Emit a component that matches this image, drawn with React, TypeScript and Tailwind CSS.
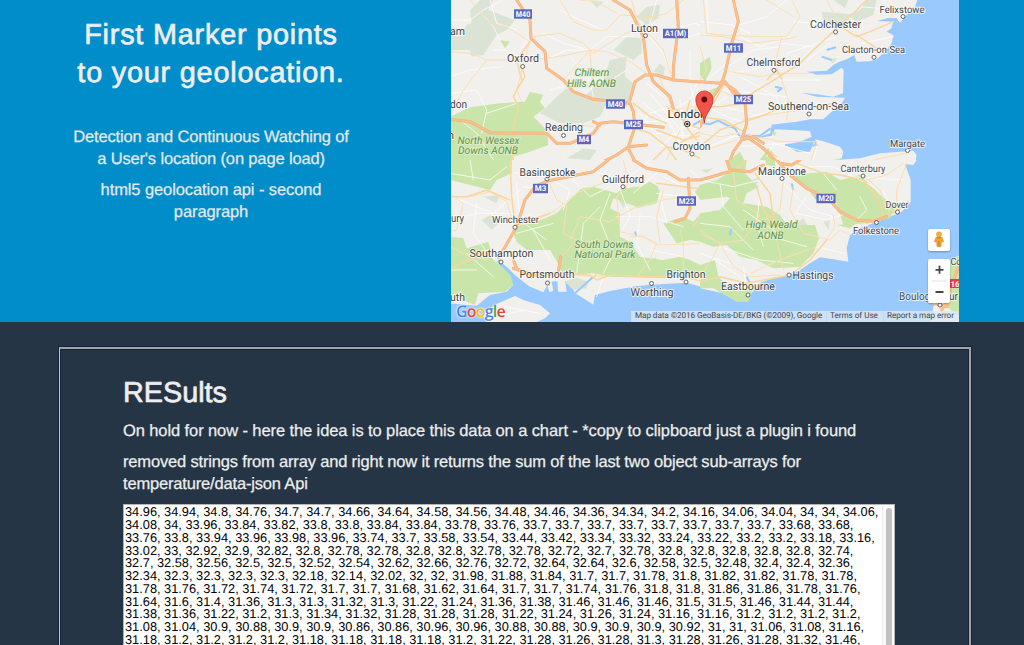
import React from 'react';

type Kind = 'city' | 'small' | 'capital' | 'park';
type Label = { t: string; x: number; y: number; w: number; k?: Kind; a?: 'start' };

const labels: Label[] = [
  { t: 'am', x: 450, y: 35, w: 15, a: 'start' },
  { t: 'don', x: 450, y: 108, w: 17, a: 'start' },
  { t: 'n', x: 448, y: 139, w: 6, a: 'start' },
  { t: 'ury', x: 451, y: 222, w: 13, a: 'start' },
  { t: 'uth', x: 450, y: 301, w: 15, a: 'start' },
  { t: 'Oxford', x: 523, y: 61.5, w: 32 },
  { t: 'Luton', x: 644.5, y: 32, w: 27 },
  { t: 'Reading', x: 564, y: 131, w: 38 },
  { t: 'London', x: 687, y: 118, w: 39, k: 'capital' },
  { t: 'Croydon', x: 691.5, y: 150, w: 38 },
  { t: 'Basingstoke', x: 547.5, y: 176, w: 56 },
  { t: 'Guildford', x: 623, y: 183, w: 42 },
  { t: 'Winchester', x: 515.5, y: 223, w: 47, k: 'small' },
  { t: 'Southampton', x: 501.5, y: 257, w: 64 },
  { t: 'Portsmouth', x: 547, y: 278, w: 55 },
  { t: 'Worthing', x: 652, y: 296, w: 43 },
  { t: 'Brighton', x: 686, y: 278, w: 39 },
  { t: 'Eastbourne', x: 748, y: 290, w: 54 },
  { t: 'Hastings', x: 813, y: 279, w: 41 },
  { t: 'Felixstowe', x: 902, y: 13, w: 45, k: 'small' },
  { t: 'Colchester', x: 835.5, y: 28, w: 51 },
  { t: 'Clacton-on-Sea', x: 873.5, y: 53, w: 63, k: 'small' },
  { t: 'Chelmsford', x: 773.5, y: 65.5, w: 54 },
  { t: 'Southend-on-Sea', x: 808.5, y: 110, w: 81 },
  { t: 'Margate', x: 907.5, y: 147, w: 35, k: 'small' },
  { t: 'Maidstone', x: 782, y: 175, w: 48 },
  { t: 'Canterbury', x: 863, y: 172, w: 45, k: 'small' },
  { t: 'Dover', x: 897, y: 208, w: 23, k: 'small' },
  { t: 'Folkestone', x: 876, y: 234, w: 46, k: 'small' },
  { t: 'Boulogne-sur', x: 899, y: 300, w: 59, a: 'start' },
  { t: 'Co', x: 950.5, y: 265, w: 11, k: 'small', a: 'start' },
  { t: 'Chiltern', x: 592, y: 76, w: 35, k: 'park' },
  { t: 'Hills AONB', x: 591.5, y: 86.5, w: 49, k: 'park' },
  { t: 'North Wessex', x: 488.5, y: 143.5, w: 62, k: 'park' },
  { t: 'Downs AONB', x: 488, y: 154, w: 60, k: 'park' },
  { t: 'South Downs', x: 604, y: 247.5, w: 59, k: 'park' },
  { t: 'National Park', x: 605, y: 258, w: 61, k: 'park' },
  { t: 'High Weald', x: 771.5, y: 228, w: 52, k: 'park' },
  { t: 'AONB', x: 770.5, y: 238.5, w: 26, k: 'park' },
];

const shields: [string, number, number, number][] = [
  ['M40', 523, 14, 18], ['A1(M)', 675.5, 33.5, 25], ['M40', 615.5, 104, 19], ['M25', 633.5, 124.5, 19],
  ['M4', 584, 139.5, 14], ['M11', 733.5, 48, 19], ['M25', 743.5, 99.5, 19], ['M3', 540.5, 188.5, 15],
  ['M23', 686.5, 201, 19], ['M20', 826, 198.5, 19],
];

const towns: [number, number][] = [
  [522.7, 66.5], [645.5, 35.7], [563.5, 135.5], [692, 154], [547, 179], [623, 186.7], [515, 227.3], [501, 262],
  [547.5, 283], [651.5, 283.5], [686, 282], [748, 295], [789, 275], [903, 16.5], [835.5, 32], [874, 57.3],
  [774, 70.3], [809, 114], [907.5, 150.5], [782, 178.5], [863, 176], [897.5, 212], [876.5, 222.5], [940, 305],
];

type TileProps = {
  x: number; y: number; w: number; h: number;
  land: string; pale: string; park: string; water?: string; minor: string; yellow: string; thin: string; major: string;
};

function Tile({ x, y, w, h, land, pale, park, water, minor, yellow, thin, major }: TileProps) {
  return (
    <svg x={x} y={y} width={w} height={h} viewBox={`0 0 ${w * 3} ${h * 3}`}>
      <path d={`M0 0H${w * 3}V${h * 3}H0Z`} fill="#99c9fd" />
      <path d={land} fill="#f2f0ed" />
      <path d={pale} fill="#dbe4d4" />
      <path d={park} fill="#c9e5a9" />
      {water && <path d={water} fill="none" stroke="#99c9fd" strokeWidth="6" strokeLinejoin="round" />}
      <g fill="none" strokeLinejoin="round" strokeLinecap="round">
        <path d={minor} stroke="#fff" strokeOpacity="0.75" strokeWidth="3" />
        <path d={thin} stroke="#fadfb2" strokeWidth="3" />
        <path d={yellow} stroke="#f9d69b" strokeWidth="4.5" />
        <path d={major} stroke="#f2ad74" strokeWidth="9" />
        <path d={major} stroke="#fabf8d" strokeWidth="6.5" />
      </g>
    </svg>
  );
}

function MapCanvas() {
  return (
    <svg className="block h-[322px] w-[508px]" viewBox="451 0 508 322">
      <Tile
        x={450} y={0} w={250} h={160}
        land="M0 0H780V495H0Z"
        pale="M0 80L40 90L50 75L65 70L60 30L90 0H130L115 30L195 60L170 90L140 105L100 165L65 170L60 150H0Z M270 340L320 290L350 265L400 290L470 310L450 350L400 370L330 370Z M400 290L460 240L480 180L530 170L525 230L550 250L530 320L480 310Z M490 150L530 110L575 115L575 160L550 180Z M560 50L590 20L630 15L625 55L590 75Z M350 475L400 445L440 450L420 480Z M610 215L630 190L645 205L640 225Z M420 0L460 5L440 25Z"
        park="M0 350L60 322L150 310L225 305L240 275L280 285L270 305L285 325L250 350L290 390L295 435L240 455L190 470L185 495H0Z M150 120L180 125L165 145Z M760 160L780 190V245L760 225Z"
        water="M730 375L755 360L770 375"
        minor="M0 60L60 60L100 30L160 0M90 35L130 80L150 120M130 150L170 150L195 175M0 230L60 210L160 200M120 0L140 70L200 90M240 110L210 150M285 180L350 150L420 150M280 100L340 130L400 145M360 170L420 240L430 290M300 270L340 260M0 280L80 270L110 330L95 400M110 340L200 310M420 150L470 110L550 110M470 250L530 210M330 30L390 60L460 90M600 110L640 160L660 210M620 0L600 70M690 80L740 70L780 95M550 400L600 340L660 320M570 340L650 450M590 250L640 290M600 280L700 400M620 400L740 410M650 340L720 300L740 250M660 330L780 420M690 300L700 450M720 250L740 330L780 330M640 370L710 320L780 310M630 440L700 380L780 390M720 150L720 240M650 100L720 110L780 90M560 370L650 360M580 310L660 370L690 430M30 360L80 400L140 495"
        thin="M0 155L60 160L110 180L200 180L290 175L350 165L420 150L470 155L540 185L590 220M240 125L170 80L120 70L60 0M250 110L330 100L400 130L430 160L510 110L570 80M330 0L370 65L430 90L470 90L510 45L620 50M420 150L340 240M420 155L430 270L520 320M0 350L40 270L110 180M390 0L440 5L500 40M700 0L650 40L580 60M240 120L200 270L215 305M545 0L560 60L640 150L665 230M670 330L780 310M620 210L660 310M290 400L350 370L430 380M690 390L650 480"
        yellow="M215 200L225 230L200 270L190 290L205 320L185 400L190 495M240 125L200 180L215 240M660 320L700 340L740 330L780 300M540 380L600 400L650 440L690 495M650 320L710 370L780 400M620 390L700 420L780 400M550 310L600 350L650 370M690 430L740 400L780 380M610 480L650 440L700 450L780 490M720 300L700 370L740 420M760 260L740 320L720 350"
        major="M200 0L220 30L240 60L243 115L285 155L290 205L340 240L370 275L430 298L540 310L550 335L555 380L535 440L500 465L440 495M0 358L60 365L120 398L290 400L320 430L360 430L430 400L450 370L490 365L640 382M490 0L540 30L580 110L590 195L610 245L660 290L670 325M680 0L685 80L670 200L670 240L620 225L585 225L555 245L540 300M670 240L780 248M535 440L590 435M430 365L450 375M535 445L560 495"
      />
      <Tile
        x={700} y={0} w={259} h={160}
        land="M0 0H652L645 20L620 45L600 68L590 55L565 54L530 63L580 65L574 85L560 95L580 105L575 130L560 150L530 178L510 184L470 185L463 165L440 178L415 187L400 195L380 212L320 215L350 224L395 223L425 203L431 210L429 280L400 290L350 283L305 278L350 290L435 293L425 310L390 340L370 358L330 358L290 365L250 370L215 374L211 400L180 410L130 400V405L180 414L215 407L225 388L330 393L335 410L300 425L255 435L290 455L330 455L345 418L370 424L420 440L430 455L425 475L410 480L480 475L540 460L600 455L640 452L650 465L645 495H0Z"
        pale="M365 35L445 42L450 70L410 90L370 60Z M400 0L445 0L435 25Z M385 178L412 174L400 190Z M440 45L480 30L500 0L530 0L520 45L470 65Z"
        park="M0 190L30 170L35 205L15 245L0 225Z M90 480L120 455L140 495H85Z M180 480L205 443L220 460L215 495H180Z M25 315L30 270L70 255L40 290Z M215 397L230 397L224 408Z M400 480L425 474L410 490Z"
        water="M0 370L30 372L55 362L80 375L105 385L120 410L150 408L180 408L212 385M225 260L245 265L232 275M380 150L408 142M395 180L365 170M310 440L350 435L340 415M255 435L320 432L290 450"
        minor="M0 65L100 75L150 100M20 0L25 100M100 80L200 50L260 0M120 110L180 140L270 110M100 190L160 150L240 140M240 130L340 140M260 160L350 130L410 110M90 220L200 200L250 250M20 240L80 190M60 270L170 280L260 290M150 350L230 330L280 330M120 230L230 290L240 340M250 240L360 240M0 310L80 350L140 370M0 340L80 290M0 400L120 410L190 430M110 440L260 430M0 450L100 410L140 370M200 470L220 430L330 460M350 440L340 480M30 310L150 340M280 65L360 70M480 20L600 30M480 130L580 110M320 180L390 130"
        thin="M0 105L70 110L150 130L240 120L290 110M275 0L300 50L260 110L180 110L60 105L20 100L10 0M90 215L180 230L240 220L340 220M245 115L225 190L245 240L265 300L260 360M0 140L20 210L0 240M130 360L200 345L270 335L400 315M200 0L280 50M430 90L380 0M0 400L60 410L120 400L240 425L350 425M0 455L110 420M30 300L60 270L100 290M330 490L350 430M480 495L540 475L620 460"
        yellow="M0 440L60 390L130 365L180 350L250 320L330 325L400 310M140 290L230 235L300 190L340 150L405 90L470 30L500 0M430 85L470 110L510 95L580 65M470 105L530 145M0 320L60 320L130 310M0 350L70 360L130 395M40 310L75 250M140 410L190 445L230 470M245 235L230 210L200 240"
        major="M100 0L115 65L95 130L75 220L65 250L0 245M65 245L105 270L135 305L140 370L125 420L100 455L85 495M0 380L20 320L70 245M140 410L190 445L240 495M125 420L160 410L190 430M75 245L105 285"
      />
      <Tile
        x={450} y={160} w={250} h={162}
        land="M0 0H780V388L710 368L640 372L560 378L480 393L435 405L430 434L400 415L375 400L360 370L345 362L350 395L325 395L318 363L305 365L310 392L298 397L292 375L280 397L240 380L200 350L170 320L145 305L155 330L190 375L170 395L120 405L80 437L0 430Z M95 460L145 430L195 408L220 420L270 435L300 460L285 475L240 495H115Z"
        pale="M345 365L375 352L415 365L410 385L370 390Z M95 180L120 165L150 185L125 210Z M100 110L150 105L140 130Z M370 150L390 120L430 150L400 170Z M500 110L530 90L550 110L520 145Z M120 310L145 302L150 330Z M600 300L620 290L615 310Z"
        park="M0 0H185V40L140 60L120 90L60 75L0 60Z M190 220L210 195L250 190L320 160L350 130L395 85L430 80L500 100L520 80L550 90L600 65L625 80L620 130L560 140L490 115L480 145L510 160L510 230L540 245L570 290L640 300L690 290L720 300L750 315V350L640 355L480 350L430 340L335 345L330 320L300 270L230 270L200 245Z M640 190L700 170L730 185L750 162V245L720 240L680 250L660 220Z M735 95L750 75V118Z M0 230L40 235L50 265L115 245L130 300L180 340L190 375L165 395L85 400L75 435L0 405Z M515 90L555 80L600 80L630 90L620 130L560 145Z"
        water="M145 300L180 340L210 360M375 400L430 350M555 215L560 230M320 395L320 365"
        minor="M0 40L120 60L170 20M60 0L70 60M190 40L280 30M200 70L210 180L290 240M210 90L130 160L30 120M0 180L80 160L190 160M80 130L70 220L120 290M0 330L80 330M50 280L130 350M200 220L310 190M250 210L300 300M290 50L360 90L340 150M350 40L420 110L480 80M430 30L500 60L540 170L510 220M480 100L450 180L490 280L460 340M380 340L400 190L450 140M500 170L600 170L700 200M550 100L630 30M630 110L650 190M640 50L700 80M570 160L560 250L600 330M600 270L700 290M620 100L700 110M540 50L600 0M460 350L440 410M160 440L270 460M130 470L230 450M220 80L290 90M720 30L780 80"
        thin="M0 110L60 110L120 95L170 125L190 190M0 100L40 130L20 210L0 215M200 180L250 185L310 155L380 100L480 60M290 50L320 120L350 135L340 220L380 240L335 290M360 240L390 170L480 185L550 145L640 120L700 110M500 110L510 215L580 230L620 250L600 300L560 350M520 0L535 70L500 110M540 230L580 230L620 255L780 250M640 90L620 170L630 250M0 260L60 290L120 300M320 340L420 350L500 345M690 210L700 250L700 355M780 120L730 200"
        yellow="M0 110L50 110L110 90L180 120M180 0L185 110L195 195M110 285L50 300L0 330M330 340L420 345L440 360L480 345L620 350L700 350L780 370M430 355L440 340M620 70L780 90M200 195L240 180L300 160"
        major="M550 0L590 25L650 35L690 60L780 60M145 292L160 270L200 200L225 120L255 80L295 62L430 35L475 0M715 55L720 145L705 175L675 185M190 300L200 325L230 340M190 325L250 345L330 340M332 290L325 335"
      />
      <Tile
        x={700} y={160} w={259} h={162}
        land="M0 0H650L640 15L615 12L632 60V125L605 155L560 175L520 190L480 205L450 225L440 265L445 305L400 298L360 292L330 310L300 330L270 345L220 355L175 370L155 400L125 425L95 415L70 400L0 385Z M780 285L770 290L750 315L720 400L700 440L690 495H780Z"
        pale="M280 195L310 175L325 200L300 215Z M370 185L390 180L385 210Z M450 90L485 75L475 100Z M0 30L40 25L20 40Z M155 60L180 50L170 75Z"
        park="M0 75L50 60L85 40L80 0H140L135 40L175 80L140 100L130 130L80 110L0 120Z M0 160L60 150L90 115L130 130L200 140L240 165L260 195L345 195L357 235L340 280L300 320L220 325L170 300L120 290L80 255L40 260L0 245Z M270 45L380 35L420 60L480 45L540 105L590 140L570 175L500 190L430 195L410 130L340 110L320 80Z M0 315L45 300L55 350L80 375L110 395L165 370L145 425L110 425L40 385L0 385Z M195 0H225V20L200 15Z M410 195L470 190L450 205Z M750 310L780 285V470L740 440L745 370Z"
        water="M90 225L95 205M275 70L280 90M140 350L150 370M345 115L360 105"
        minor="M0 60L100 80L180 60M60 70L70 140L130 210M180 100L170 190L190 260M240 60L330 150L400 170M320 110L260 200M270 20L400 20L520 80M430 0L450 50L610 60M550 90L570 150M370 40L410 90M290 160L380 180L440 160M0 190L90 200L160 270M130 150L250 230M60 260L180 300L280 310M30 290L120 350M350 260L430 280M180 220L320 260M480 110L500 150L470 180M130 320L140 390M0 280L90 310"
        thin="M100 35L110 120L180 165L130 240L60 250L0 220M0 210L60 250L100 320L150 350L240 345M280 80L270 150L310 220L390 240L420 210L450 225M400 165L405 200L380 240L340 285M175 180L230 240L250 330M470 0L500 55L540 90L560 150M620 10L590 90L590 150M0 350L40 290L60 250M250 60L240 150L180 190M150 340L240 300L350 260M500 60L560 45L610 10"
        yellow="M90 30L60 40L0 60M290 10L370 40L420 45L490 60L530 110L550 165M165 40L210 100L220 180M0 365L60 350L140 370L270 345L330 300L380 240M500 190L590 155L625 125M100 35L140 0M170 80L190 150L240 210"
        major="M80 0L90 30L150 35L190 15M0 60L90 35M230 0L270 45L320 85L390 120L420 155L470 180L520 184L560 170M240 10L275 15L300 0M780 310L750 390L740 440L700 430M725 450L740 425"
      />
      {shields.map(([t, x, y, w], i) => (
        <g key={i}>
          <rect x={x - w / 2} y={y - 4.7} width={w} height="9.4" fill="#5b66be" />
          <text x={x} y={y + 2.7} textAnchor="middle" textLength={w - 3.5} lengthAdjust="spacingAndGlyphs" className="fill-white font-['Roboto',sans-serif] text-[8px] font-bold">{t}</text>
        </g>
      ))}
      {towns.map(([x, y], i) => <circle key={i} cx={x} cy={y} r="2" fill="#fff" stroke="#555" strokeWidth="0.9" />)}
      {labels.map((l, i) => {
        const park = l.k === 'park';
        const cls = park
          ? "fill-[#5d9147] font-['Roboto',sans-serif] text-[10.5px] italic"
          : l.k === 'small'
            ? "fill-[#444] font-['Roboto',sans-serif] text-[10px]"
            : l.k === 'capital'
              ? "fill-[#222] font-['Roboto',sans-serif] text-[11.5px]"
              : "fill-[#444] font-['Roboto',sans-serif] text-[11px]";
        return (
          <text key={i} x={l.x} y={l.y} textAnchor={l.a ?? 'middle'} textLength={l.w} lengthAdjust="spacingAndGlyphs"
            stroke={park ? '#e3f0d3' : '#fff'} strokeOpacity="0.8" strokeWidth="1.8" paintOrder="stroke" className={cls}>{l.t}</text>
        );
      })}
      <circle cx="687.3" cy="124" r="2.7" fill="#fff" stroke="#222" />
      <circle cx="687.3" cy="124" r="1.3" fill="#222" />
      <path d="M704.3 123C704 113 695.8 109 695.8 99.5A8.6 8.6 0 0 1 713 99.5C713 109 704.8 113 704.3 123Z" fill="#f5534a" stroke="#b6322c" strokeWidth="0.8" />
      <circle cx="704.3" cy="99.5" r="2.9" fill="#5f0f10" />
      <rect x="948" y="279" width="12" height="9" fill="#e23b48" />
      <text x="950.5" y="286.5" className="fill-white font-['Roboto',sans-serif] text-[8px] font-bold">16</text>
    </svg>
  );
}

const wordmark: [string, string][] = [
  ['G', 'text-[#4285f4]'], ['o', 'text-[#ea4335]'], ['o', 'text-[#fbbc05]'], ['g', 'text-[#4285f4]'], ['l', 'text-[#34a853]'], ['e', 'text-[#ea4335]'],
];

function MapPanel() {
  return (
    <div className="relative h-[322px] w-[508px] overflow-hidden">
      <MapCanvas />
      <div className="absolute bottom-[1px] left-[5px] flex font-['Open_Sans',sans-serif] text-[16px] leading-[20px] font-semibold tracking-[-0.8px] [text-shadow:0_0_2px_#fff,0_0_2px_#fff]">
        {wordmark.map(([c, cls], i) => <span key={i} className={cls}>{c}</span>)}
      </div>
      <div className="absolute top-[228.5px] left-[477px] flex h-[22px] w-[22px] items-center justify-center rounded-[2px] bg-white shadow-[0_1px_2px_rgba(0,0,0,0.3)]">
        <svg className="h-[17px] w-[12px]" viewBox="0 0 12 17">
          <path d="M3 6.3Q6 5 9 6.3L10.7 10.5L9.3 11.2L8.5 9.4L8 15.7H4L3.5 9.4L2.7 11.2L1.3 10.5Z" fill="#f2a72c" stroke="#ce8420" strokeWidth="0.5" />
          <circle cx="6" cy="3.3" r="2.5" fill="#f7b239" stroke="#ce8420" strokeWidth="0.5" />
          <path d="M6 10V15.5M4 6.6Q6 8 8 6.6" stroke="#b9721b" strokeWidth="0.8" fill="none" />
        </svg>
      </div>
      <div className="absolute top-[259px] left-[477px] flex h-[44px] w-[22px] flex-col items-center rounded-[2px] bg-white shadow-[0_1px_2px_rgba(0,0,0,0.3)]">
        <svg className="h-[44px] w-[22px]" viewBox="0 0 22 44">
          <path d="M7.5 10.8H15.5M11.5 6.8V14.8M7.5 33H15.5" stroke="#444" strokeWidth="1.8" />
          <path d="M3.5 22H18.5" stroke="#e3e3e3" />
        </svg>
      </div>
      <div className="absolute right-0 bottom-0 flex h-[11px] items-center bg-[#dce8f3]/80 font-['Roboto',sans-serif] text-[8.2px] leading-[11px] whitespace-nowrap text-[#444]">
        <span className="w-[195px] pl-[4px] tracking-[-0.09px]">Map data ©2016 GeoBasis-DE/BKG (©2009), Google</span>
        <span className="w-[57px] border-l border-[#c3d9ef] pl-[3px] tracking-[-0.05px]">Terms of Use</span>
        <span className="w-[76px] border-l border-[#c3d9ef] pl-[3px] tracking-[-0.08px]">Report a map error</span>
      </div>
    </div>
  );
}

const rows = [
  '34.96, 34.94, 34.8, 34.76, 34.7, 34.7, 34.66, 34.64, 34.58, 34.56, 34.48, 34.46, 34.36, 34.34, 34.2, 34.16, 34.06, 34.04, 34, 34, 34.06,',
  '34.08, 34, 33.96, 33.84, 33.82, 33.8, 33.8, 33.84, 33.84, 33.78, 33.76, 33.7, 33.7, 33.7, 33.7, 33.7, 33.7, 33.7, 33.7, 33.68, 33.68,',
  '33.76, 33.8, 33.94, 33.96, 33.98, 33.96, 33.74, 33.7, 33.58, 33.54, 33.44, 33.42, 33.34, 33.32, 33.24, 33.22, 33.2, 33.2, 33.18, 33.16,',
  '33.02, 33, 32.92, 32.9, 32.82, 32.8, 32.78, 32.78, 32.8, 32.8, 32.78, 32.78, 32.72, 32.7, 32.78, 32.8, 32.8, 32.8, 32.8, 32.8, 32.74,',
  '32.7, 32.58, 32.56, 32.5, 32.5, 32.52, 32.54, 32.62, 32.66, 32.76, 32.72, 32.64, 32.64, 32.6, 32.58, 32.5, 32.48, 32.4, 32.4, 32.36,',
  '32.34, 32.3, 32.3, 32.3, 32.3, 32.18, 32.14, 32.02, 32, 32, 31.98, 31.88, 31.84, 31.7, 31.7, 31.78, 31.8, 31.82, 31.82, 31.78, 31.78,',
  '31.78, 31.76, 31.72, 31.74, 31.72, 31.7, 31.7, 31.68, 31.62, 31.64, 31.7, 31.7, 31.74, 31.76, 31.8, 31.8, 31.86, 31.86, 31.78, 31.76,',
  '31.64, 31.6, 31.4, 31.36, 31.3, 31.3, 31.32, 31.3, 31.22, 31.24, 31.36, 31.38, 31.46, 31.46, 31.46, 31.5, 31.5, 31.46, 31.44, 31.44,',
  '31.38, 31.36, 31.22, 31.2, 31.3, 31.34, 31.32, 31.28, 31.28, 31.28, 31.22, 31.24, 31.26, 31.24, 31.16, 31.16, 31.2, 31.2, 31.2, 31.2,',
  '31.08, 31.04, 30.9, 30.88, 30.9, 30.9, 30.86, 30.86, 30.96, 30.96, 30.88, 30.88, 30.9, 30.9, 30.9, 30.92, 31, 31, 31.06, 31.08, 31.16,',
  '31.18, 31.2, 31.2, 31.2, 31.2, 31.18, 31.18, 31.18, 31.18, 31.2, 31.22, 31.28, 31.26, 31.28, 31.3, 31.28, 31.26, 31.28, 31.32, 31.46,',
];

export default function App() {
  return (
    <div className="h-[645px] w-[1024px] overflow-hidden bg-[#253545] font-['Liberation_Sans',sans-serif] text-[#eee] [text-rendering:geometricPrecision]">
      <header className="flex h-[322px] bg-[#008dc9]">
        <div className="w-[451px] pt-[16px] pr-[29px] text-center">
          <h1 className="text-[28.8px] leading-[38.4px] tracking-[0.8px] [-webkit-text-stroke:0.7px_#eee]">First Marker points<br />to your geolocation.</h1>
          <p className="mt-[33px] text-[16.5px] leading-[22.4px] tracking-[-0.15px] text-[#e4e9ec] [-webkit-text-stroke:0.25px_#e4e9ec]">Detection and Continuous Watching of<br />a User's location (on page load)</p>
          <p className="mt-[8px] text-[16.5px] leading-[22.4px] tracking-[-0.1px] text-[#e4e9ec] [-webkit-text-stroke:0.25px_#e4e9ec]">html5 geolocation api - second<br />paragraph</p>
        </div>
        <MapPanel />
      </header>
      <main className="mt-[25px] ml-[59px] h-[400px] w-[912px] border-2 border-l-1 border-[#a3a3a7] border-l-[#c4c6ca] pt-[25.5px] pl-[63px] shadow-[0_0_0_1px_#17233a,inset_0_0_0_1px_#17233a]">
        <h2 className="text-[28.8px] leading-[36px] [-webkit-text-stroke:0.7px_#eee]">RESults</h2>
        <p className="mt-[9.5px] text-[16.5px] leading-[22.4px] tracking-[-0.1px] [-webkit-text-stroke:0.25px_#eee]">On hold for now - here the idea is to place this data on a chart - *copy to clipboard just a plugin i found</p>
        <p className="mt-[8.5px] text-[16.5px] leading-[22.4px] tracking-[-0.17px] [-webkit-text-stroke:0.25px_#eee]">removed strings from array and right now it returns the sum of the last two object sub-arrays for<br />temperature/data-json Api</p>
        <div className="mt-[8px] flex h-[200px] w-[772px] justify-between border border-[#b5b5b5] bg-white pt-[1.4px] pl-[1px] text-black">
          <div className="text-[12.79px] leading-[12.8px] whitespace-nowrap">
            {rows.map((r) => <div key={r}>{r}</div>)}
          </div>
          <div className="flex w-[12px] justify-center border-l border-[#ececec] bg-[#fafafa] pt-[2px]">
            <div className="h-[300px] w-[6px] rounded-full bg-[#c1c1c1]" />
          </div>
        </div>
      </main>
    </div>
  );
}
